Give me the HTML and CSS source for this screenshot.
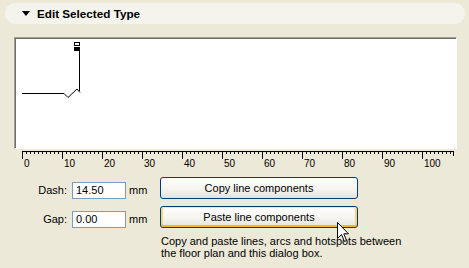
FILE: index.html
```
<!DOCTYPE html>
<html lang="en">
<head>
    <meta charset="UTF-8">
    <title>Edit Selected Type</title>
    <link rel="stylesheet" href="styles.css">
</head>
<body>
<div class="section-head"><span class="caret"></span>Edit Selected Type</div>

<div class="preview">
    <svg width="440" height="110" viewBox="0 0 440 110">
        <path d="M7,55.5 H49 L53,59.5 L62,51 L65,54.5" fill="none" stroke="#000" stroke-width="1"/>
        <path d="M64.5,12 V53" fill="none" stroke="#000" stroke-width="1"/>
        <rect x="59.5" y="4.5" width="5" height="3" fill="#fff" stroke="#000" shape-rendering="crispEdges"/>
        <rect x="59" y="9" width="6" height="4" fill="#000"/>
    </svg>
</div>

<svg class="ruler" width="469" height="20" viewBox="0 0 469 20" shape-rendering="crispEdges">
    <defs>
        <pattern id="minor" x="22" y="0" width="4" height="20" patternUnits="userSpaceOnUse">
            <rect x="0" y="2" width="1" height="3" fill="#000"/>
        </pattern>
    </defs>
    <rect x="22" y="2" width="432" height="1" fill="#000"/>
    <rect x="22" y="0" width="432" height="20" fill="url(#minor)"/>
    <path d="M22.5,2V10 M62.5,2V10 M102.5,2V10 M142.5,2V10 M182.5,2V10 M222.5,2V10 M262.5,2V10 M302.5,2V10 M342.5,2V10 M382.5,2V10 M422.5,2V10 M453.5,2V7" stroke="#000" fill="none"/>
    <g class="ruler-labels">
        <text x="24" y="18">0</text>
        <text x="64" y="18">10</text>
        <text x="104" y="18">20</text>
        <text x="144" y="18">30</text>
        <text x="184" y="18">40</text>
        <text x="224" y="18">50</text>
        <text x="264" y="18">60</text>
        <text x="304" y="18">70</text>
        <text x="344" y="18">80</text>
        <text x="384" y="18">90</text>
        <text x="424" y="18">100</text>
    </g>
</svg>

<div class="controls">
    <div class="fields">
        <div class="field">
            <label for="dash">Dash:</label>
            <input id="dash" type="text" value="14.50">
            <span class="unit">mm</span>
        </div>
        <div class="field">
            <label for="gap">Gap:</label>
            <input id="gap" type="text" value="0.00">
            <span class="unit">mm</span>
        </div>
    </div>
    <div class="actions">
        <button class="xp-btn">Copy line components</button>
        <button class="xp-btn hot">Paste line components</button>
        <p class="hint">Copy and paste lines, arcs and hotspots between<br>the floor plan and this dialog box.</p>
    </div>
</div>

<svg class="cursor" width="14" height="22" viewBox="0 0 14 22">
    <path d="M0.5,0.5 V16.5 L4.5,12.5 L7.5,19.5 L9.5,18.5 L6.8,11.8 H11.5 Z" fill="#fff" stroke="#000" stroke-width="1" stroke-linejoin="miter"/>
</svg>
</body>
</html>
```

FILE: styles.css
```
body {
    margin: 0;
    background: #ece9d8;
    font-family: "Liberation Sans", Arial, sans-serif;
    font-size: 11px;
    color: #000;
    width: 469px;
    height: 268px;
    overflow: hidden;
}
.section-head {
    margin: 3px 4px 0 5px;
    height: 21px;
    border-radius: 10px;
    background: #f4f3ec;
    display: flex;
    align-items: center;
    padding-left: 17px;
    font-weight: bold;
    font-size: 11.7px;
}
.caret {
    width: 0;
    height: 0;
    border-left: 4px solid transparent;
    border-right: 4px solid transparent;
    border-top: 5px solid #000;
    margin-right: 7px;
}
.preview {
    margin: 13px 0 0 14px;
    width: 441px;
    height: 110px;
    background: #fff;
    border-top: 1px solid #a09f97;
    border-left: 1px solid #a09f97;
    border-bottom: 1px solid #fff;
    border-right: 1px solid #fff;
    box-shadow: inset 1px 1px 0 #716f64;
}
.preview svg {
    display: block;
}
.ruler {
    display: block;
}
.ruler-labels text {
    font-family: "Liberation Sans", Arial, sans-serif;
    font-size: 10px;
    fill: #000;
}
.controls {
    display: flex;
    margin-top: 8px;
}
.fields {
    width: 160px;
    margin-top: 2px;
    display: flex;
    flex-direction: column;
    gap: 7px;
}
.field {
    height: 22px;
    display: flex;
    align-items: center;
}
.field label {
    width: 67px;
    text-align: right;
    margin-right: 5px;
}
.field input {
    box-sizing: border-box;
    width: 54px;
    height: 17px;
    border: 1px solid #7f9db9;
    padding: 0 0 0 3px;
    font: 11px "Liberation Sans", Arial, sans-serif;
    background: #fff;
    margin: 0 3px 0 0;
}
.actions {
    width: 198px;
    display: flex;
    flex-direction: column;
    gap: 7px;
}
.xp-btn {
    box-sizing: border-box;
    height: 22px;
    width: 198px;
    border: 1px solid #003c74;
    border-radius: 3px;
    background: linear-gradient(#ffffff, #f4f3ee 60%, #e3e2da);
    font: 11px "Liberation Sans", Arial, sans-serif;
    color: #000;
    padding: 0;
}
.xp-btn.hot {
    box-shadow: inset 0 1px 0 #ffe7a2, inset 0 -2px 0 #f8b330, inset 2px 0 0 #fbd47c, inset -2px 0 0 #fbd47c;
}
.hint {
    margin: 0;
    padding-left: 1px;
    line-height: 12px;
    white-space: nowrap;
}
.cursor {
    position: absolute;
    left: 337px;
    top: 222px;
}
```
